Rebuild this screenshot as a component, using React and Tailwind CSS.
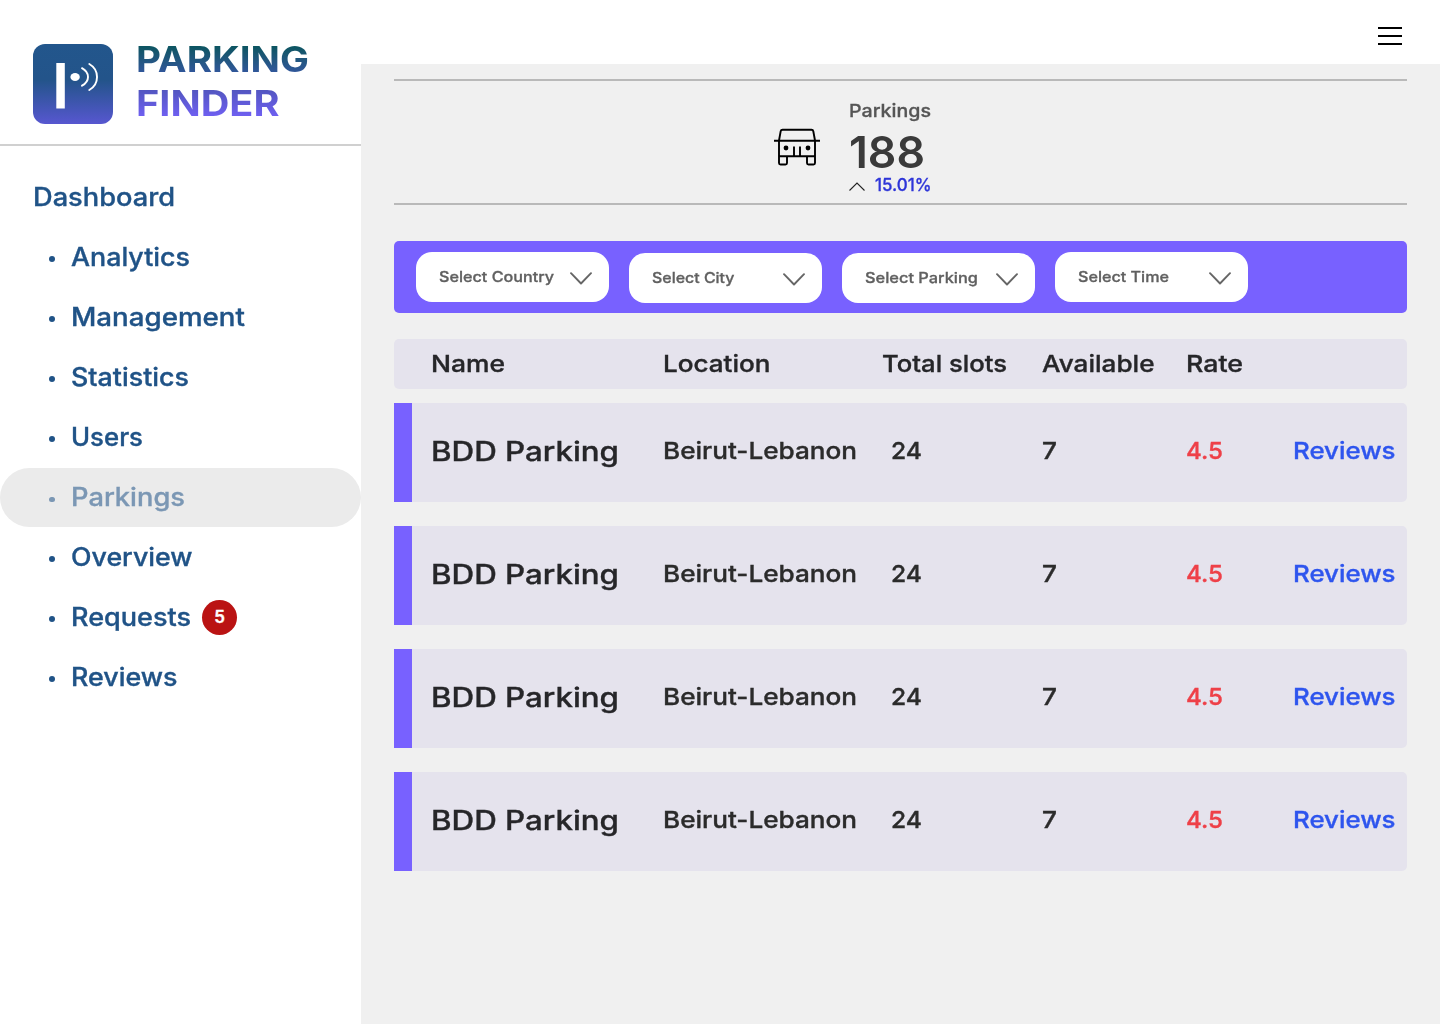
import { useLayoutEffect, useRef, useState } from "react";

// Single line of text stretched horizontally to an exact advance width.
function Label({ w, className = "", children }) {
  const ref = useRef(null);
  const [scale, setScale] = useState(1);
  useLayoutEffect(() => {
    setScale(w / ref.current.getBoundingClientRect().width);
  }, []);
  return (
    <span className="block shrink-0 text-left whitespace-nowrap" style={{ width: w }}>
      <span
        ref={ref}
        className={"inline-block origin-left align-top " + className}
        style={{ transform: `scaleX(${scale})` }}
      >
        {children}
      </span>
    </span>
  );
}

const navItems = [
  { label: "Analytics", w: 119 },
  { label: "Management", w: 174 },
  { label: "Statistics", w: 118 },
  { label: "Users", w: 72 },
  { label: "Parkings", w: 114, active: true },
  { label: "Overview", w: 121.5 },
  { label: "Requests", w: 120, badge: 5 },
  { label: "Reviews", w: 106.5 },
];

const filters = [
  { label: "Select Country", w: 115, pos: "mt-[11px]" },
  { label: "Select City", w: 82.5, pos: "mt-3" },
  { label: "Select Parking", w: 113, pos: "mt-3" },
  { label: "Select Time", w: 91, pos: "mt-[11px]" },
];

const columns = "grid grid-cols-[232px_219px_160px_144px_108px_1fr]";

function Logo() {
  return (
    <svg className="h-20 w-20 shrink-0" viewBox="0 0 80 80" fill="none">
      <defs>
        <linearGradient id="logo" x1="0" y1="0" x2="0" y2="1">
          <stop offset="0" stopColor="#22568c" />
          <stop offset="0.45" stopColor="#23548a" />
          <stop offset="1" stopColor="#5757d0" />
        </linearGradient>
      </defs>
      <rect width="80" height="80" rx="12" fill="url(#logo)" />
      <path d="M23.3 19h8.5v45.5h-8.5z" fill="#fff" />
      <ellipse cx="42.1" cy="33" rx="4.7" ry="4" fill="#fff" />
      <path d="M49 24.200c8 4.500 8 13 0 17.500M56.300 20c10.300 6 10.300 20 0 26" stroke="#fff" strokeWidth="1.9" strokeLinecap="round" />
    </svg>
  );
}

function CarIcon() {
  return (
    <svg className="h-[38px] w-[46px]" viewBox="0 0 46 38" fill="none" stroke="#000" strokeWidth="1.9" strokeLinejoin="round">
      <path d="M0 12.700h46M5 12.500 6.700 3.200Q7 1.700 8.500 1.700h29Q39 1.700 39.300 3.200L41 12.500" />
      <path d="M5 12.500V35q0 1.500 1.500 1.500h5q1.500 0 1.500-1.500v-6.700M41 12.500V35q0 1.500-1.500 1.500h-5q-1.500 0-1.500-1.500v-6.700M5 28.300h36M20 18.500v9.500M26 18.500v9.500" />
      <circle cx="12" cy="20" r="2.400" fill="#000" stroke="none" />
      <circle cx="34" cy="20" r="2.400" fill="#000" stroke="none" />
    </svg>
  );
}

function Sidebar() {
  return (
    <aside className="h-full w-[361px] shrink-0 bg-white">
      <div className="flex h-[146px] gap-[22.500px] border-b-2 border-[#d0d0d0] pl-[33px]">
        <div className="pt-11">
          <Logo />
        </div>
        <div className="pt-[36.500px] text-[35px] leading-[44px] font-bold">
          <Label w={173} className="bg-linear-to-b from-[#0a5560] from-20% to-[#33569f] to-85% bg-clip-text text-transparent">
            PARKING
          </Label>
          <Label w={143.5} className="bg-linear-to-b from-[#5055bc] from-15% to-[#7160f5] to-85% bg-clip-text text-transparent">
            FINDER
          </Label>
        </div>
      </div>
      <nav className="pt-[21px] text-[25px] leading-[60px] font-medium text-[#205387] [-webkit-text-stroke:0.35px]">
        <div className="h-[60px] pl-[33px] leading-[61px]">
          <Label w={142}>Dashboard</Label>
        </div>
        <ul>
          {navItems.map((item) => (
            <li key={item.label} className={item.active ? "h-[60px] pt-px" : "h-[60px]"}>
              <div
                className={
                  item.active
                    ? "flex h-[59px] items-center rounded-full bg-[#ebebeb] pl-[49px] leading-[59px] text-[#7b97b4]"
                    : "flex h-[60px] items-center pl-[49px]"
                }
              >
                <span className="mt-1 mr-4 h-[5.500px] w-[5.500px] rounded-full bg-current" />
                <Label w={item.w}>{item.label}</Label>
                {item.badge && (
                  <span className="ml-[11.500px] flex h-[35px] w-[35px] items-center justify-center rounded-full bg-[#ba1313] pt-px text-[17px] leading-none font-semibold text-white">
                    {item.badge}
                  </span>
                )}
              </div>
            </li>
          ))}
        </ul>
      </nav>
    </aside>
  );
}

function Stats() {
  return (
    <section className="flex h-[126px] border-y-2 border-[#b9b9b9] pl-[380px]">
      <div className="pt-[47px]">
        <CarIcon />
      </div>
      <div className="pt-[15px] pl-[29px] font-medium">
        <div className="text-[17.500px] leading-[30px] text-[#555] [-webkit-text-stroke:0.3px]">
          <Label w={82}>Parkings</Label>
        </div>
        <div className="text-[44px] leading-[52px] font-semibold text-[#3a3a3a]">
          <Label w={76}>188</Label>
        </div>
        <div className="-mt-0.5 flex items-center gap-2.5 text-[17.500px] leading-[18px] text-[#2e35d8] [-webkit-text-stroke:0.3px]">
          <svg className="mt-0.5 h-[9px] w-4" viewBox="0 0 16 9" fill="none" stroke="#222" strokeWidth="1.100">
            <path d="M.5 8.500 8 1l7.500 7.500" />
          </svg>
          <Label w={56.5}>15.01%</Label>
        </div>
      </div>
    </section>
  );
}

function Filters() {
  return (
    <section className="mt-9 flex h-[72px] gap-5 rounded-[5px] bg-[#7861ff] pl-[22px]">
      {filters.map((f) => (
        <button
          key={f.label}
          className={"flex h-[50px] w-[193px] items-center justify-between rounded-2xl bg-white pr-[17px] pl-[23px] text-[14.500px] font-medium text-[#606060] [-webkit-text-stroke:0.3px] " + f.pos}
        >
          <Label w={f.w}>{f.label}</Label>
          <svg className="mt-0.5 h-[13px] w-[22px]" viewBox="0 0 22 13" fill="none" stroke="#666" strokeWidth="1.900" strokeLinecap="round" strokeLinejoin="round">
            <path d="M1 1.200 11 11.500 21 1.200" />
          </svg>
        </button>
      ))}
    </section>
  );
}

function ParkingRow() {
  return (
    <div className={columns + " h-[99px] items-center rounded-r-[5px] border-l-[18px] border-[#7861ff] bg-[#e5e3ed] pb-1 pl-[19px] text-[23.500px] leading-8 font-medium text-[#2b2b2b] [-webkit-text-stroke:0.35px]"}>
      <div className="pt-0.5 text-[27px] text-[#262629]">
        <Label w={188}>BDD Parking</Label>
      </div>
      <Label w={194}>Beirut-Lebanon</Label>
      <div className="pl-[9px]">
        <Label w={31}>24</Label>
      </div>
      <Label w={15}>7</Label>
      <div className="text-[#ee4048]">
        <Label w={37}>4.5</Label>
      </div>
      <div className="-ml-px text-[#2e55ee]">
        <Label w={102.5}>Reviews</Label>
      </div>
    </div>
  );
}

export default function App() {
  return (
    <div className="flex h-[1024px] w-[1440px] overflow-hidden bg-[#f0f0f0] font-['Inter',sans-serif]">
      <Sidebar />
      <div className="flex-1">
        <header className="flex h-16 justify-end bg-white pt-[27px] pr-[38px]">
          <button className="flex h-[18px] w-6 flex-col justify-between" aria-label="Menu">
            <span className="h-0.5 w-full bg-black" />
            <span className="h-0.5 w-full bg-black" />
            <span className="h-0.5 w-full bg-black" />
          </button>
        </header>
        <main className="px-[33px] pt-[15px]">
          <Stats />
          <Filters />
          <div className={columns + " mt-[26px] h-[50px] items-center rounded-[5px] bg-[#e5e3ed] pl-[37px] text-[23.500px] leading-8 font-medium text-[#262629] [-webkit-text-stroke:0.35px]"}>
            <Label w={74}>Name</Label>
            <Label w={107.5}>Location</Label>
            <Label w={125}>Total slots</Label>
            <Label w={112.5}>Available</Label>
            <Label w={57}>Rate</Label>
          </div>
          <div className="mt-3.5 flex flex-col gap-6">
            <ParkingRow />
            <ParkingRow />
            <ParkingRow />
            <ParkingRow />
          </div>
        </main>
      </div>
    </div>
  );
}
